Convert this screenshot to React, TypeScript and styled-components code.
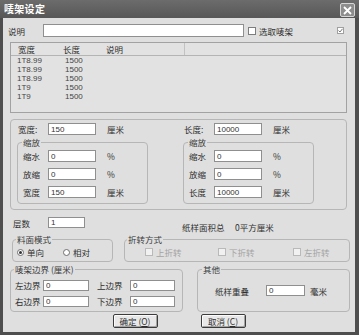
import React from "react";
import styled, { createGlobalStyle } from "styled-components";

const GlobalStyle = createGlobalStyle`
  html, body { margin: 0; padding: 0; background: #dedede; }
  body { font-family: "Noto Sans CJK SC", "Liberation Sans", sans-serif; }
`;

// khung cửa sổ
const Dialog = styled.div`
  width: 359px;
  height: 335px;
  display: flex;
  flex-direction: column;
  overflow: hidden;
  color: #2f2f2f;
  font-size: 8.5px;
  line-height: 10px;
`;

const TitleBar = styled.div`
  height: 18px;
  flex: none;
  display: flex;
  align-items: center;
  justify-content: space-between;
  padding-left: 4px;
  padding-right: 4px;
  background: linear-gradient(#6c6c6c, #575757);
`;

const Title = styled.span`
  color: #fff;
  font-weight: 700;
  font-size: 10px;
  letter-spacing: 0.3px;
`;

const CloseButton = styled.div`
  width: 15px;
  height: 14px;
  margin-top: 2px;
  box-sizing: border-box;
  border: 1px solid #d6d6d6;
  border-radius: 2px;
  background: #8d8d8d;
  display: flex;
  align-items: center;
  justify-content: center;
`;

const Body = styled.div`
  flex: 1;
  background: #dfdfdf;
  border-left: 3px solid #4e4e4e;
  border-right: 4px solid #4e4e4e;
  border-bottom: 3px solid #4e4e4e;
  display: flex;
  flex-direction: column;
`;

const Label = styled.span<{ $w?: number }>`
  flex: none;
  width: ${({ $w }) => ($w ? `${$w}px` : "auto")};
  white-space: nowrap;
`;

const TextBox = styled.input<{ $w: number; $h?: number }>`
  box-sizing: border-box;
  flex: none;
  width: ${({ $w }) => $w}px;
  height: ${({ $h }) => $h ?? 12}px;
  margin: 0;
  padding: 0 2px;
  border: 1px solid #8f8f8f;
  background: #fff;
  font: 8px "Liberation Sans", sans-serif;
  color: #333;
  outline: none;
`;

const CheckBox = styled.span<{ $disabled?: boolean }>`
  flex: none;
  box-sizing: border-box;
  width: 8px;
  height: 8px;
  border: 1px solid ${({ $disabled }) => ($disabled ? "#b9b9b9" : "#7d7d7d")};
  background: ${({ $disabled }) => ($disabled ? "#f1f1f1" : "#fff")};
  display: flex;
  align-items: center;
  justify-content: center;
`;

const CheckLabel = styled.span<{ $disabled?: boolean }>`
  margin-left: 3px;
  color: ${({ $disabled }) => ($disabled ? "#a3a3a3" : "#2f2f2f")};
  white-space: nowrap;
`;

/* dòng mô tả */
const DescRow = styled.div`
  display: flex;
  align-items: center;
  height: 13px;
  margin-top: 6px;
  padding-left: 5px;
  padding-right: 11px;
`;

const TopCheck = styled.div`
  display: flex;
  align-items: center;
  margin-left: 4px;
`;

const CornerCheck = styled(CheckBox)`
  margin-left: auto;
  width: 7px;
  height: 7px;
  border-color: #a0a0a0;
`;

/* danh sách */
const ListBox = styled.div`
  box-sizing: border-box;
  height: 71px;
  margin: 5px 8px 0 7px;
  border: 1px solid #a2a2a2;
  background: #e2e2e2;
`;

const ListHeader = styled.div`
  display: flex;
  height: 12px;
  border-bottom: 1px solid #b4b4b4;
  align-items: stretch;
`;

const HeadCell = styled.div<{ $w?: number; $sep?: boolean }>`
  box-sizing: border-box;
  width: ${({ $w }) => ($w ? `${$w}px` : "auto")};
  flex: ${({ $w }) => ($w ? "none" : "1")};
  padding-left: 7px;
  display: flex;
  align-items: center;
  border-right: ${({ $sep }) => ($sep ? "1px solid #c2c2c2" : "none")};
`;

const ListRow = styled.div`
  display: flex;
  height: 9px;
  align-items: center;
  padding-left: 6px;
  font: 8px/9px "Liberation Sans", sans-serif;
  color: #444;
`;

const RowCell = styled.span<{ $w: number }>`
  width: ${({ $w }) => $w}px;
`;

/* nhóm kích thước */
const SizeGroup = styled.div`
  box-sizing: border-box;
  margin: 6px 8px 0 7px;
  padding: 3px 6px 5px 6px;
  border: 1px solid #b6b6b6;
  border-radius: 4px;
  display: grid;
  grid-template-columns: 131px 131px;
  column-gap: 35px;
`;

const SizeColumn = styled.div`
  display: flex;
  flex-direction: column;
`;

const FieldRow = styled.div<{ $indent?: number }>`
  display: flex;
  align-items: center;
  height: 12px;
  padding-left: ${({ $indent }) => $indent ?? 0}px;
`;

const Unit = styled.span<{ $gap?: number }>`
  margin-left: ${({ $gap }) => $gap ?? 11}px;
  white-space: nowrap;
`;

const Group = styled.fieldset<{ $w?: number; $pad?: number }>`
  box-sizing: border-box;
  margin: 0;
  min-width: 0;
  width: ${({ $w }) => ($w ? `${$w}px` : "auto")};
  flex: none;
  padding: 0 ${({ $pad }) => $pad ?? 4}px;
  border: 1px solid #b6b6b6;
  border-radius: 4px;
`;

const Legend = styled.legend`
  padding: 0 1px;
  margin-left: -1px;
  font-size: 8.5px;
  line-height: 10px;
  color: #3a3a3a;
`;

const ScaleGroup = styled(Group)`
  margin-top: 2px;
  padding: 3px 4px 5px 5px;
  display: flex;
  flex-direction: column;
  gap: 6px;
`;

/* số tầng */
const LayerRow = styled.div`
  display: flex;
  align-items: center;
  height: 11px;
  margin-top: 7px;
  padding-left: 10px;
`;

const AreaText = styled.div`
  display: flex;
  margin-left: 97px;
  margin-top: 8px;
`;

const OptionRow = styled.div`
  display: flex;
  margin-top: 6px;
  padding-left: 9px;
  gap: 11px;
`;

const ChoiceLine = styled.div<{ $indent?: number }>`
  display: flex;
  align-items: center;
  height: 10px;
  padding: 3px 0 4px ${({ $indent }) => $indent ?? 0}px;
`;

const Choice = styled.div<{ $w: number }>`
  display: flex;
  align-items: center;
  width: ${({ $w }) => $w}px;
  flex: none;
`;

const Radio = styled.span<{ $on?: boolean }>`
  box-sizing: border-box;
  width: 7px;
  height: 7px;
  border-radius: 50%;
  border: 1px solid #6f6f6f;
  background: #fff;
  display: flex;
  align-items: center;
  justify-content: center;
  &::after {
    content: "";
    width: 3px;
    height: 3px;
    border-radius: 50%;
    background: ${({ $on }) => ($on ? "#333" : "transparent")};
  }
`;

const MarginRow = styled.div`
  display: flex;
  margin-top: 2px;
  padding-left: 7px;
  gap: 14px;
`;

const MarginGrid = styled.div`
  display: flex;
  flex-direction: column;
  gap: 4px;
  padding-top: 5px;
  padding-bottom: 4px;
`;

const SideLabel = styled(Label)`
  margin-left: 8px;
`;

const OtherRow = styled.div`
  display: flex;
  align-items: center;
  height: 11px;
  padding-top: 11px;
  padding-left: 12px;
`;

const ButtonRow = styled.div`
  display: flex;
  justify-content: center;
  gap: 43px;
  margin-top: 2px;
`;

const Button = styled.div`
  box-sizing: border-box;
  width: 45px;
  height: 14px;
  border: 1px solid #3c3c3c;
  border-radius: 2px;
  background: #e8e8e8;
  box-shadow: inset 1px 1px 0 #fbfbfb, inset -1px -1px 0 #a3a3a3;
  display: flex;
  align-items: center;
  justify-content: center;
  white-space: nowrap;
  u { text-decoration: underline; }
`;

const rows = [
  ["1T8.99", "1500"],
  ["1T8.99", "1500"],
  ["1T8.99", "1500"],
  ["1T9", "1500"],
  ["1T9", "1500"],
];

const sizes = [
  { name: "宽度", value: "150" },
  { name: "长度", value: "10000" },
];

const Tick = () => (
  <svg width="5" height="5" viewBox="0 0 5 5">
    <path d="M0.5 2.5 L2 4 L4.5 0.8" fill="none" stroke="#777" strokeWidth="1" />
  </svg>
);

export default function App() {
  return (
    <>
      <GlobalStyle />
      <Dialog>
        <TitleBar>
          <Title>唛架设定</Title>
          <CloseButton>
            <svg width="9" height="9" viewBox="0 0 9 9">
              <path d="M1 1 L8 8 M8 1 L1 8" stroke="#fff" strokeWidth="1.8" />
            </svg>
          </CloseButton>
        </TitleBar>
        <Body>
          <DescRow>
            <Label $w={35}>说明</Label>
            <TextBox $w={201} $h={13} readOnly value="" />
            <TopCheck>
              <CheckBox />
              <CheckLabel>选取唛架</CheckLabel>
            </TopCheck>
            <CornerCheck>
              <Tick />
            </CornerCheck>
          </DescRow>

          <ListBox>
            <ListHeader>
              <HeadCell $w={45}>宽度</HeadCell>
              <HeadCell $w={43}>长度</HeadCell>
              <HeadCell $w={86} $sep>
                说明
              </HeadCell>
              <HeadCell />
            </ListHeader>
            {rows.map((r, i) => (
              <ListRow key={i}>
                <RowCell $w={48}>{r[0]}</RowCell>
                <RowCell $w={40}>{r[1]}</RowCell>
              </ListRow>
            ))}
          </ListBox>

          <SizeGroup>
            {sizes.map((s) => (
              <SizeColumn key={s.name}>
                <FieldRow $indent={1}>
                  <Label $w={30}>{s.name}:</Label>
                  <TextBox $w={48} readOnly value={s.value} />
                  <Unit>厘米</Unit>
                </FieldRow>
                <ScaleGroup>
                  <Legend>缩放</Legend>
                  <FieldRow>
                    <Label $w={25}>缩水</Label>
                    <TextBox $w={48} readOnly value="0" />
                    <Unit>%</Unit>
                  </FieldRow>
                  <FieldRow>
                    <Label $w={25}>放缩</Label>
                    <TextBox $w={48} readOnly value="0" />
                    <Unit>%</Unit>
                  </FieldRow>
                  <FieldRow>
                    <Label $w={25}>{s.name}</Label>
                    <TextBox $w={48} readOnly value={s.value} />
                    <Unit>厘米</Unit>
                  </FieldRow>
                </ScaleGroup>
              </SizeColumn>
            ))}
          </SizeGroup>

          <LayerRow>
            <Label $w={35}>层数</Label>
            <TextBox $w={37} $h={11} readOnly value="1" />
            <AreaText>
              <Label $w={53}>纸样面积总</Label>
              <Label>0平方厘米</Label>
            </AreaText>
          </LayerRow>

          <OptionRow>
            <Group $w={101}>
              <Legend>料面模式</Legend>
              <ChoiceLine>
                <Choice $w={46}>
                  <Radio $on />
                  <CheckLabel>单向</CheckLabel>
                </Choice>
                <Choice $w={40}>
                  <Radio />
                  <CheckLabel>相对</CheckLabel>
                </Choice>
              </ChoiceLine>
            </Group>
            <Group $w={226} $pad={3}>
              <Legend>折转方式</Legend>
              <ChoiceLine $indent={17}>
                <Choice $w={73}>
                  <CheckBox $disabled />
                  <CheckLabel $disabled>上折转</CheckLabel>
                </Choice>
                <Choice $w={75}>
                  <CheckBox $disabled />
                  <CheckLabel $disabled>下折转</CheckLabel>
                </Choice>
                <Choice $w={50}>
                  <CheckBox $disabled />
                  <CheckLabel $disabled>左折转</CheckLabel>
                </Choice>
              </ChoiceLine>
            </Group>
          </OptionRow>

          <MarginRow>
            <Group $w={173}>
              <Legend>唛架边界 (厘米)</Legend>
              <MarginGrid>
                <FieldRow>
                  <Label $w={28}>左边界</Label>
                  <TextBox $w={46} $h={11} readOnly value="0" />
                  <SideLabel $w={33}>上边界</SideLabel>
                  <TextBox $w={45} $h={11} readOnly value="0" />
                </FieldRow>
                <FieldRow>
                  <Label $w={28}>右边界</Label>
                  <TextBox $w={46} $h={11} readOnly value="0" />
                  <SideLabel $w={33}>下边界</SideLabel>
                  <TextBox $w={45} $h={11} readOnly value="0" />
                </FieldRow>
              </MarginGrid>
            </Group>
            <Group $w={153} $pad={5}>
              <Legend>其他</Legend>
              <OtherRow>
                <Label $w={51}>纸样重叠</Label>
                <TextBox $w={39} $h={11} readOnly value="0" />
                <Unit $gap={5}>毫米</Unit>
              </OtherRow>
            </Group>
          </MarginRow>

          <ButtonRow>
            <Button>
              确定 (<u>O</u>)
            </Button>
            <Button>
              取消 (<u>C</u>)
            </Button>
          </ButtonRow>
        </Body>
      </Dialog>
    </>
  );
}
